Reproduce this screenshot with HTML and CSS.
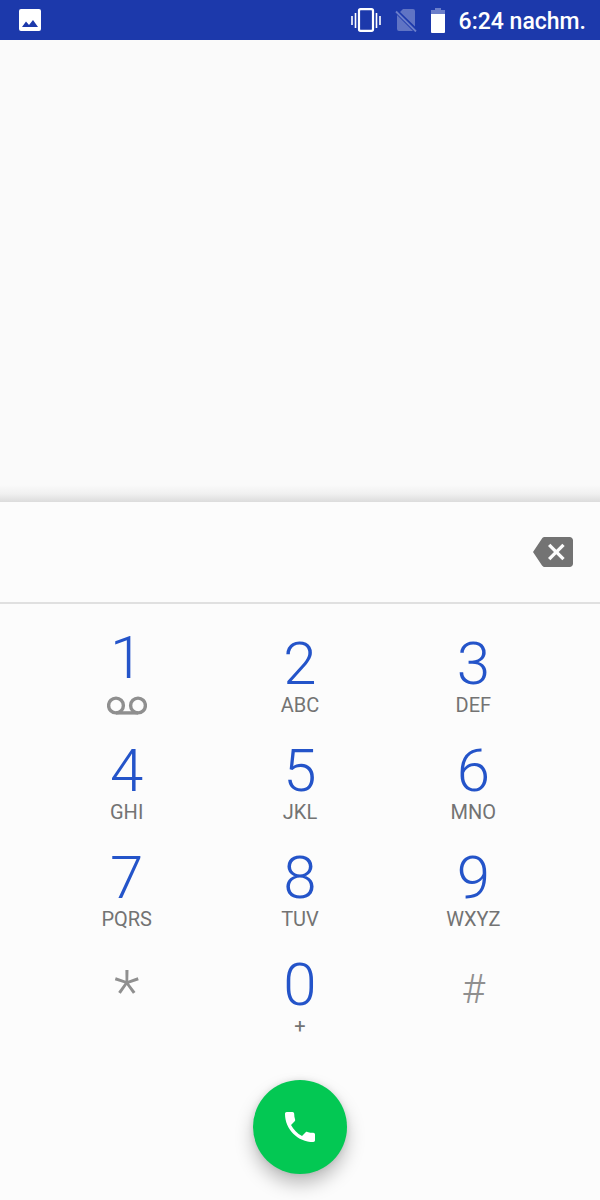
FILE: index.html
```html
<!DOCTYPE html>
<html lang="de">
<head>
<meta charset="UTF-8" />
<meta name="viewport" content="width=device-width, initial-scale=1" />
<title>Telefon</title>
<link rel="stylesheet" href="styles.css">
</head>
<body>

<header class="status-bar">
  <svg class="icon-image" viewBox="0 0 22 22">
    <path fill="#fff" fill-rule="evenodd" d="M2 0h18a2 2 0 0 1 2 2v18a2 2 0 0 1-2 2H2a2 2 0 0 1-2-2V2a2 2 0 0 1 2-2zM3 18h16l-5-7-4 5-3-3.500z"/>
  </svg>
  <div class="status-right">
    <svg class="icon-vibrate" viewBox="0 0 30 24" fill="none" stroke="#fff">
      <rect x="8" y="1.200" width="14" height="21.600" rx="1.500" stroke-width="2.200"/>
      <path stroke-width="1.600" d="M1 8v9M4.500 5v15M25.500 5v15M29 8v9"/>
    </svg>
    <svg class="icon-sim" viewBox="0 0 22 24">
      <path fill="#6074c4" d="M8 1h10a2 2 0 0 1 2 2v15.500L5 3.900zM2 7 18 23H4a2 2 0 0 1-2-2z"/>
      <path stroke="#6c7fca" stroke-width="1.800" d="M1 3.500 21 23.500"/>
    </svg>
    <svg class="icon-battery" viewBox="0 0 14 25">
      <path fill="#6c7fca" d="M4 0h6v2h4v5H0V2h4z"/>
      <path fill="#fff" d="M0 6h14v18a1 1 0 0 1-1 1H1a1 1 0 0 1-1-1z"/>
    </svg>
    <span class="clock">6:24 nachm.</span>
  </div>
</header>

<main class="results"></main>

<section class="dialpad">
  <div class="number-row">
    <input type="tel" class="number" id="number" aria-label="Telefonnummer" />
    <button class="delete" onclick="deleteDigit()" aria-label="Löschen">
      <svg viewBox="0 0 24 24" width="40" height="40"><path fill="#737373" d="M22 3H7c-.69 0-1.230.350-1.590.880L0 12l5.410 8.110c.360.530.900.890 1.590.890h15c1.100 0 2-.900 2-2V5c0-1.100-.900-2-2-2zm-3 12.590L17.590 17 14 13.410 10.410 17 9 15.590 12.590 12 9 8.410 10.410 7 14 10.590 17.590 7 19 8.410 15.410 12 19 15.590z"/></svg>
    </button>
  </div>

  <div class="keys">
    <button class="key" value="1">
      <span class="digit">1</span>
      <svg class="voicemail" viewBox="0 0 40 34" fill="none" stroke="#8f8f8f" stroke-width="3.400">
        <circle cx="9" cy="17.500" r="7.400"/>
        <circle cx="31" cy="17.500" r="7.400"/>
        <path d="M9 24.900h22"/>
      </svg>
    </button>
    <button class="key" value="2"><span class="digit">2</span><span class="letters">ABC</span></button>
    <button class="key" value="3"><span class="digit">3</span><span class="letters">DEF</span></button>
    <button class="key" value="4"><span class="digit">4</span><span class="letters">GHI</span></button>
    <button class="key" value="5"><span class="digit">5</span><span class="letters">JKL</span></button>
    <button class="key" value="6"><span class="digit">6</span><span class="letters">MNO</span></button>
    <button class="key" value="7"><span class="digit">7</span><span class="letters">PQRS</span></button>
    <button class="key" value="8"><span class="digit">8</span><span class="letters">TUV</span></button>
    <button class="key" value="9"><span class="digit">9</span><span class="letters">WXYZ</span></button>
    <button class="key key-star" value="*">*</button>
    <button class="key" value="0"><span class="digit">0</span><span class="letters">+</span></button>
    <button class="key key-hash" value="#">#</button>
  </div>

  <button class="call" aria-label="Anrufen">
    <svg viewBox="0 0 24 24" width="40" height="40"><path fill="#fff" d="M6.620 10.790c1.440 2.830 3.760 5.140 6.590 6.590l2.200-2.200c.270-.270.670-.360 1.020-.240 1.120.370 2.330.570 3.570.570.550 0 1 .450 1 1V20c0 .550-.450 1-1 1-9.390 0-17-7.610-17-17 0-.550.450-1 1-1h3.500c.550 0 1 .450 1 1 0 1.250.200 2.450.570 3.570.110.350.030.740-.250 1.020l-2.200 2.200z"/></svg>
  </button>
</section>

<script>
const number = document.getElementById('number');

document.querySelectorAll('.key').forEach(key => {
  key.addEventListener('click', () => {
    number.value += key.value;
  });
});

function deleteDigit() {
  number.value = number.value.slice(0, -1);
}
</script>

</body>
</html>
```

FILE: styles.css
```css
* {
  box-sizing: border-box;
}
body {
  margin: 0;
  min-height: 100vh;
  display: flex;
  flex-direction: column;
  background: #fafafa;
  font-family: Roboto, "Liberation Sans", sans-serif;
}
button {
  border: none;
  padding: 0;
  background: none;
  font-family: inherit;
  cursor: pointer;
}
svg {
  display: block;
}

/* status bar */
.status-bar {
  height: 40px;
  padding: 0 14px 0 19px;
  display: flex;
  align-items: center;
  justify-content: space-between;
  background: #1c39ab;
}
.status-right {
  display: flex;
  align-items: center;
  gap: 14px;
}
.icon-image {
  width: 22px;
  height: 22px;
}
.icon-vibrate {
  width: 30px;
  height: 24px;
}
.icon-sim {
  width: 22px;
  height: 24px;
}
.icon-battery {
  width: 14px;
  height: 25px;
}
.clock {
  color: #fff;
  font-size: 23px;
  line-height: 28px;
  font-weight: 500;
  padding-top: 4px;
}

/* empty result list, darkens towards the dialpad */
.results {
  flex: 1;
  background: linear-gradient(to top, #dcdcdc, #f0f0f0 8px, #fafafa 17px);
}

/* dialpad */
.dialpad {
  display: flex;
  flex-direction: column;
  align-items: center;
  padding-bottom: 26px;
  background: #fcfcfc;
}
.number-row {
  width: 100%;
  height: 102px;
  padding: 0 27px;
  display: flex;
  align-items: center;
  border-bottom: 2px solid #e0e0e0;
}
.number {
  flex: 1;
  min-width: 0;
  height: 60px;
  border: none;
  outline: none;
  background: none;
  color: #2454c9;
  font-family: inherit;
  font-size: 40px;
  text-align: center;
}
.keys {
  width: 100%;
  padding: 17px 40px 0;
  display: grid;
  grid-template-columns: repeat(3, 1fr);
  grid-auto-rows: 107px;
}
.key {
  display: flex;
  flex-direction: column;
  align-items: center;
  justify-content: center;
}
.digit {
  color: #2454c9;
  font-size: 60px;
  line-height: 60px;
  font-weight: 300;
}
.letters {
  color: #737373;
  font-size: 20px;
  line-height: 22px;
}
.voicemail {
  width: 40px;
  height: 34px;
}
.key-star,
.key-hash {
  color: #8f8f8f;
  font-weight: 300;
}
.key-star {
  padding-bottom: 8px;
  font-size: 60px;
  line-height: 60px;
}
.key-hash {
  padding-bottom: 12px;
  font-size: 40px;
  line-height: 40px;
}
.call {
  width: 94px;
  height: 94px;
  margin-top: 31px;
  display: flex;
  align-items: center;
  justify-content: center;
  border-radius: 50%;
  background: #03c853;
  box-shadow: 0 10px 18px rgba(0, 0, 0, 0.25), 0 0 6px rgba(0, 0, 0, 0.1);
}
```
